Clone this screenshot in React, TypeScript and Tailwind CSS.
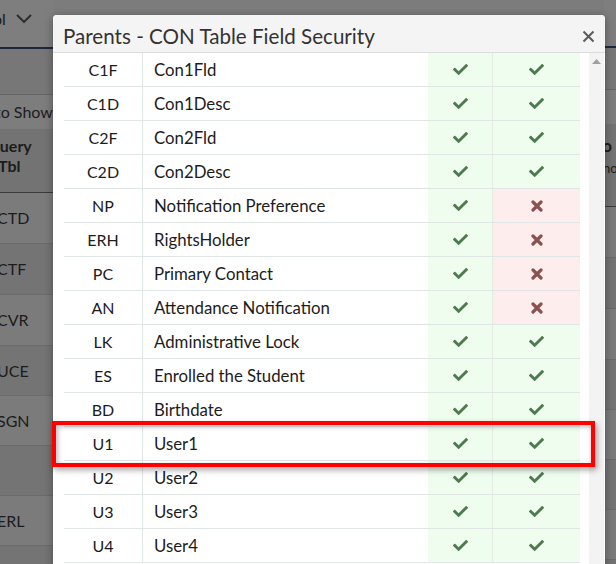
import { FaCheck } from 'react-icons/fa'

type Row = { code: string; name: string; a: boolean; b: boolean }

const rows: Row[] = [
  { code: 'C1F', name: 'Con1Fld', a: true, b: true },
  { code: 'C1D', name: 'Con1Desc', a: true, b: true },
  { code: 'C2F', name: 'Con2Fld', a: true, b: true },
  { code: 'C2D', name: 'Con2Desc', a: true, b: true },
  { code: 'NP', name: 'Notification Preference', a: true, b: false },
  { code: 'ERH', name: 'RightsHolder', a: true, b: false },
  { code: 'PC', name: 'Primary Contact', a: true, b: false },
  { code: 'AN', name: 'Attendance Notification', a: true, b: false },
  { code: 'LK', name: 'Administrative Lock', a: true, b: true },
  { code: 'ES', name: 'Enrolled the Student', a: true, b: true },
  { code: 'BD', name: 'Birthdate', a: true, b: true },
  { code: 'U1', name: 'User1', a: true, b: true },
  { code: 'U2', name: 'User2', a: true, b: true },
  { code: 'U3', name: 'User3', a: true, b: true },
  { code: 'U4', name: 'User4', a: true, b: true },
]

const bgRows = [
  { t: 'CTD', h: 'h-[51px]' },
  { t: 'CTF', h: 'h-[51px]' },
  { t: 'CVR', h: 'h-[51px]' },
  { t: 'UCE', h: 'h-[50px]' },
  { t: 'SGN', h: 'h-[50px]' },
  { t: '', h: 'h-[50px]' },
  { t: 'ERL', h: 'h-[50px]' },
  { t: '', h: 'h-[50px]' },
]

function Mark({ ok }: { ok: boolean }) {
  return ok ? (
    <FaCheck className="text-[#4c7b4d] w-[15px] h-[15px]" />
  ) : (
    <svg width="12" height="12" viewBox="0 0 12 12" className="text-[#8b5252]">
      <path d="M2 2l8 8M10 2l-8 8" stroke="currentColor" strokeWidth="3.2" strokeLinecap="round" />
    </svg>
  )
}

function Cell({ ok, w, last }: { ok: boolean; w: string; last?: boolean }) {
  return (
    <div
      className={`${w} flex items-center justify-center ${ok ? 'bg-[#effdef]' : 'bg-[#fdeeed]'} ${last ? '' : 'border-r border-[#e3ebe3]'}`}
    >
      <Mark ok={ok} />
    </div>
  )
}

export default function App() {
  return (
    <div className="relative w-[616px] h-[564px] overflow-hidden bg-[#7c7c7c] font-['Lato','Noto_Sans',sans-serif] text-[#1c1c1c]">
      {/* dimmed page behind the dialog */}
      <div className="flex h-full">
        <div className="w-[53px] flex flex-col overflow-hidden shrink-0">
          <div className="h-[47px] shrink-0 bg-[#7e7e7e] flex items-center gap-[10px] pb-[10px] whitespace-nowrap">
            <span className="text-[16px] ml-[-7px]">ol</span>
            <svg width="16" height="10" viewBox="0 0 16 10" className="text-[#2a2a2a]">
              <path d="M1 1l7 7 7-7" fill="none" stroke="currentColor" strokeWidth="1.8" />
            </svg>
          </div>
          <div className="h-[2px] shrink-0 bg-[#1d2742]" />
          <div className="h-[46px] shrink-0 bg-[#777777] border-b border-[#666666]" />
          <div className="h-[35px] shrink-0 bg-[#7d7d7d] border-b border-[#727272] flex items-center whitespace-nowrap text-[16px]">
            <span className="ml-[-5px]">to Show All</span>
          </div>
          <div className="h-[63px] shrink-0 bg-[#737373] border-b border-[#3b3b3b] flex flex-col pt-[6px] whitespace-nowrap font-bold text-[16px] leading-[20px]">
            <span className="ml-[-13px]">Query</span>
            <span className="ml-[-2px]">Tbl</span>
          </div>
          {bgRows.map((r, i) => (
            <div
              key={i}
              className={`${r.h} shrink-0 flex items-center whitespace-nowrap text-[16px] border-b border-[#6b6b6b] ${i % 2 ? 'bg-[#747474]' : 'bg-[#7b7b7b]'}`}
            >
              <span className="ml-[-3px]">{r.t}</span>
            </div>
          ))}
        </div>
        <div className="flex-1" />
        <div className="w-[12px] flex flex-col overflow-hidden shrink-0">
          <div className="h-[46px] shrink-0 bg-[#7e7e7e]" />
          <div className="h-[2px] shrink-0 bg-[#1d2742]" />
          <div className="h-[42px] shrink-0 bg-[#777777] border-b border-[#666666]" />
          <div className="h-[35px] shrink-0 bg-[#7d7d7d] border-b border-[#727272]" />
          <div className="h-[82px] shrink-0 bg-[#737373] border-b border-[#3b3b3b] flex flex-col pt-[10px] whitespace-nowrap leading-[22px]">
            <span className="ml-[-6px] font-bold text-[17px]">io</span>
            <span className="ml-[-1px] text-[13px]">no</span>
          </div>
          {bgRows.map((r, i) => (
            <div
              key={i}
              className={`${r.h} shrink-0 border-b border-[#6b6b6b] ${i % 2 ? 'bg-[#747474]' : 'bg-[#7b7b7b]'}`}
            />
          ))}
        </div>
      </div>

      {/* dialog */}
      <div className="absolute left-[53px] top-[15px] w-[552px] h-[600px] bg-white rounded-[4px] shadow-[0_2px_10px_rgba(0,0,0,0.35)] flex flex-col overflow-hidden">
        <div className="h-[38px] shrink-0 bg-[#f4f4f4] border-b border-[#dcdcdc] flex items-center justify-between pl-[10px] pr-[10px] pt-[6px]">
          <span className="text-[20.6px] text-[#333333]">Parents - CON Table Field Security</span>
          <svg width="13" height="13" viewBox="0 0 13 13" className="text-[#5a5a5a]">
            <path d="M1.5 1.5l10 10M11.5 1.5l-10 10" stroke="currentColor" strokeWidth="2" />
          </svg>
        </div>
        <div className="flex flex-1 min-h-0">
          <div className="flex flex-col pl-[11px] w-[527px] shrink-0">
            {rows.map((r) => (
              <div key={r.code} className="flex h-[34px] shrink-0 border-b border-[#e0e6e6] text-[16px]">
                <div className="w-[79px] flex items-center justify-center border-r border-[#e0e6e6]">{r.code}</div>
                <div className="w-[285px] flex items-center pl-[11px] text-[16.8px]">{r.name}</div>
                <Cell ok={r.a} w="w-[65px]" />
                <Cell ok={r.b} w="w-[87px]" last />
              </div>
            ))}
          </div>
          <div className="w-[9px]" />
          <div className="w-[15px] bg-[#f3f3f3] flex flex-col items-center pt-[6px]">
            <svg width="9" height="5" viewBox="0 0 9 5">
              <path d="M0 5L4.5 0L9 5z" fill="#a0a0a0" />
            </svg>
            <div className="flex-1" />
            <div className="w-[7px] h-[60px] rounded-[4px] bg-[#a8a8a8] translate-y-[14px]" />
          </div>
        </div>
      </div>

      {/* annotation highlight */}
      <div className="absolute left-[52px] top-[421px] w-[543px] h-[46px] border-[4px] border-[#ff0000] shadow-[2px_3px_6px_rgba(0,0,0,0.35),inset_2px_2px_5px_rgba(0,0,0,0.25)]" />
    </div>
  )
}
